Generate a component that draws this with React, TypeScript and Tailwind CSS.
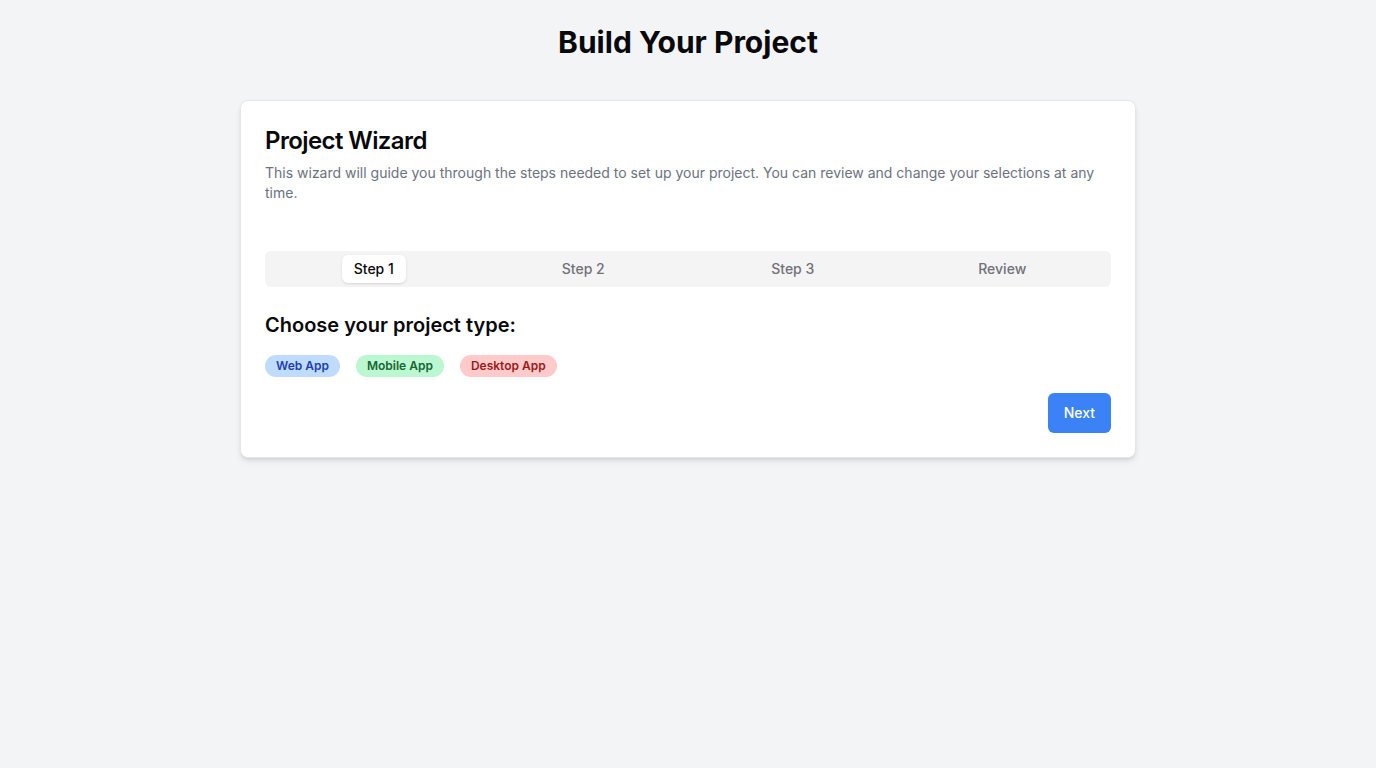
import React, { useState } from "react";

const steps = ["Step 1", "Step 2", "Step 3", "Review"];

export default function App() {
  const [active, setActive] = useState("Step 1");

  return (
    <div className="min-h-screen bg-[#f3f4f6] px-6 py-6 font-['Inter',sans-serif] text-[#09090b]">
      <h1 className="text-3xl font-bold text-center mb-10">Build Your Project</h1>

      <div className="max-w-4xl mx-auto bg-white border border-[#e5e7eb] rounded-lg shadow-md">
        <div className="p-6">
          <h2 className="text-2xl font-semibold tracking-tight">Project Wizard</h2>
          <p className="mt-1.5 text-sm text-[#6b7280]">
            This wizard will guide you through the steps needed to set up your project. You can review and change your selections at any time.
          </p>
        </div>

        <div className="p-6">
          <div className="grid grid-cols-4 h-9 items-center rounded-md bg-[#f4f4f5] p-1">
            {steps.map(s => (
              <div key={s} className="flex justify-center">
                <button
                  type="button"
                  onClick={() => setActive(s)}
                  className={`px-3 py-1 rounded-md text-sm font-medium ${
                    active === s ? "bg-white text-[#09090b] shadow-sm" : "text-[#71717a]"
                  }`}
                >
                  {s}
                </button>
              </div>
            ))}
          </div>

          <h3 className="mt-6 text-xl font-semibold">Choose your project type:</h3>
          <div className="mt-4 flex gap-4">
            <span className="rounded-full bg-[#bfdbfe] px-[11px] py-[3px] text-xs font-semibold text-[#1e40af]">Web App</span>
            <span className="rounded-full bg-[#bbf7d0] px-[11px] py-[3px] text-xs font-semibold text-[#166534]">Mobile App</span>
            <span className="rounded-full bg-[#fecaca] px-[11px] py-[3px] text-xs font-semibold text-[#991b1b]">Desktop App</span>
          </div>

          <div className="mt-4 flex justify-end">
            <button type="button" className="h-10 px-4 rounded-md bg-[#3b82f6] text-sm font-medium text-white">
              Next
            </button>
          </div>
        </div>
      </div>
    </div>
  );
}
